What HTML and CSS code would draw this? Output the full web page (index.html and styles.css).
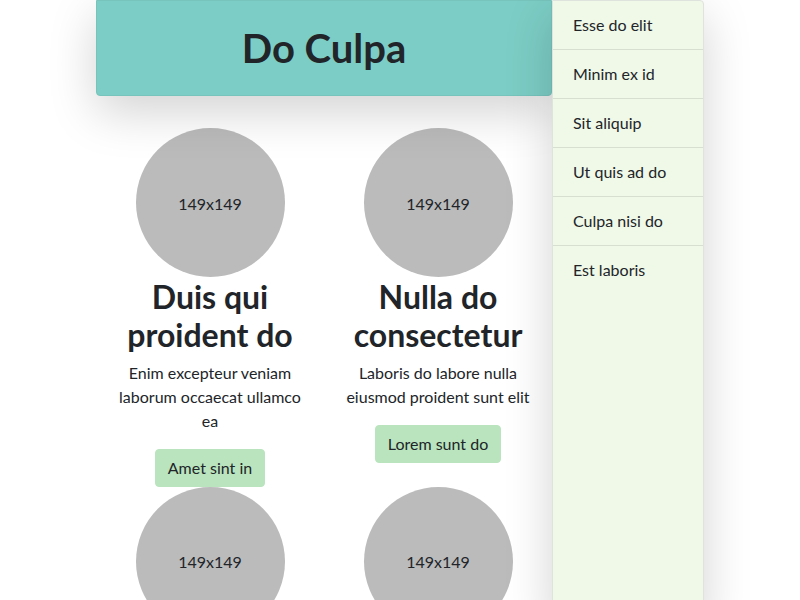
FILE: index.html
```html
<!DOCTYPE html>
<html>
<head>
<meta charset="utf-8">
<link rel="stylesheet" href="styles.css">
</head>
<body>
<div class="layout">
  <main class="main">
    <header class="hero"><h1>Do Culpa</h1></header>
    <div class="grid">
      <div class="card">
        <div class="thumb">149x149</div>
        <h2>Duis qui proident do</h2>
        <p>Enim excepteur veniam laborum occaecat ullamco ea</p>
        <button class="btn">Amet sint in</button>
      </div>
      <div class="card">
        <div class="thumb">149x149</div>
        <h2>Nulla do consectetur</h2>
        <p>Laboris do labore nulla eiusmod proident sunt elit</p>
        <button class="btn">Lorem sunt do</button>
      </div>
      <div class="card">
        <div class="thumb">149x149</div>
      </div>
      <div class="card">
        <div class="thumb">149x149</div>
      </div>
    </div>
  </main>
  <aside class="side">
    <ul class="menu">
      <li>Esse do elit</li>
      <li>Minim ex id</li>
      <li>Sit aliquip</li>
      <li>Ut quis ad do</li>
      <li>Culpa nisi do</li>
      <li class="last">Est laboris</li>
    </ul>
  </aside>
</div>
</body>
</html>
```
FILE: styles.css
```css
* { box-sizing: border-box; }
html, body { margin: 0; padding: 0; overflow: hidden; height: 600px; }
body {
  font-family: "Lato", "Noto Sans", sans-serif;
  font-size: 16px;
  line-height: 1.5;
  color: #212529;
  background: #fff;
}
.layout {
  width: 608px;
  margin: 0 auto;
  display: flex;
  align-items: stretch;
}
.main { width: 456px; }
.hero {
  height: 96px;
  background: #7ccdc5;
  border: 1px solid #76c4bc;
  border-radius: 0 0 4px 4px;
  box-shadow: 0 16px 48px rgba(0,0,0,0.175);
  display: flex;
  align-items: center;
  justify-content: center;
  position: relative;
}
.hero h1 {
  margin: 0;
  font-size: 40px;
  font-weight: 700;
  line-height: 1.2;
}
.grid {
  display: grid;
  grid-template-columns: 1fr 1fr;
  padding-top: 32px;
}
.card {
  display: flex;
  flex-direction: column;
  align-items: center;
  text-align: center;
  padding: 0 16px;
}
.thumb {
  width: 149px;
  height: 149px;
  border-radius: 50%;
  background: #bbbbbb;
  display: flex;
  align-items: center;
  justify-content: center;
  font-size: 16px;
  padding-top: 2px;
}
.card h2 {
  margin: 1px 0 6px;
  font-size: 32px;
  font-weight: 700;
  line-height: 1.2;
}
.card p { margin: 0 0 16px; }
.btn {
  font: inherit;
  color: #212529;
  background: #b9e4bd;
  border: 1px solid #b9e4bd;
  border-radius: 4px;
  padding: 6px 12px;
  line-height: 24px;
}
.side {
  width: 152px;
  height: 620px;
  background: #f0f8e8;
  border: 1px solid #dfe3dd;
  border-radius: 0 4px 0 0;
  box-shadow: 0 16px 48px rgba(0,0,0,0.175);
  position: relative;
  z-index: 1;
}
.menu { list-style: none; margin: 0; padding: 0; }
.menu li {
  padding: 12px 20px;
  line-height: 24px;
  border-bottom: 1px solid #d6dfd0;
}
.menu li.last { border-bottom: none; }
```
